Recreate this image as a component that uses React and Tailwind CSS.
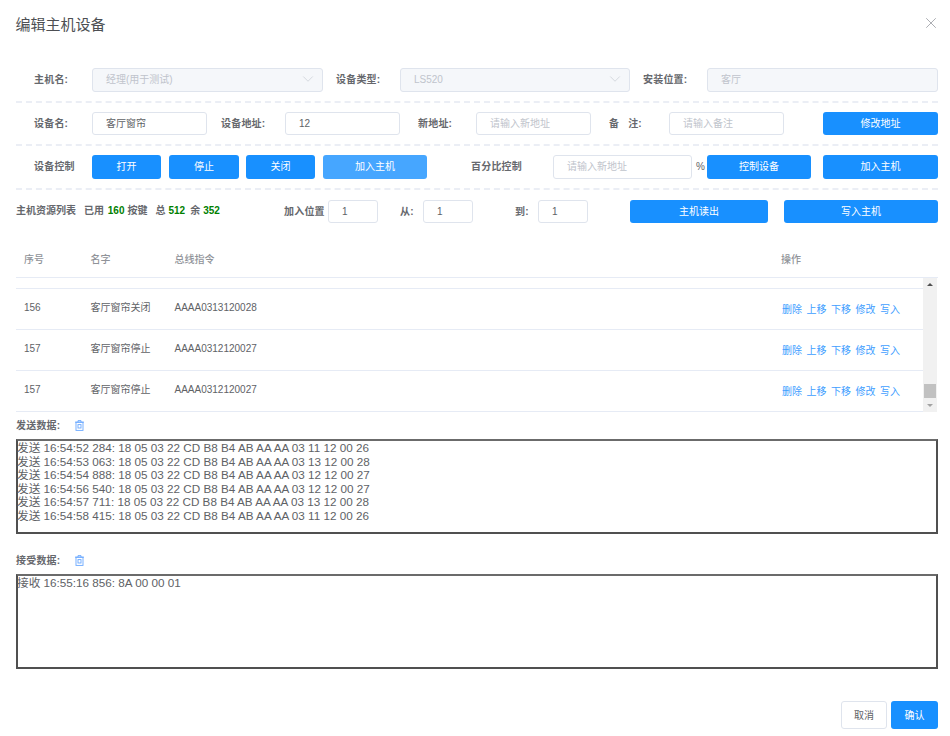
import React from "react";
import { ChevronDown, X } from "lucide-react";

const FONT = "font-['Liberation_Sans','Noto_Sans_CJK_SC',sans-serif]";

const Label = ({ className = "", children }) => (
  <span className={`shrink-0 text-[10px] font-bold text-[#66686d] tracking-[0.2px] ${className}`}>
    {children}
  </span>
);

const Input = ({ className = "", value, placeholder, disabled, chevron }) => (
  <div
    className={`shrink-0 h-[23.5px] flex items-center justify-between pl-[13px] pr-[12px] rounded-[3px] border text-[10px] border-[#dfe4ed] ${
      disabled ? "bg-[#f5f7fa] text-[#c0c4cc]" : "bg-white text-[#606266]"
    } ${className}`}
  >
    {value ? <span>{value}</span> : <span className="text-[#c0c4cc]">{placeholder}</span>}
    {chevron && <ChevronDown size={18} strokeWidth={0.8} className="text-[#c0c4cc] -mt-[2px] -mr-[7px]" />}
  </div>
);

const Btn = ({ className = "", light, children }) => (
  <button
    className={`shrink-0 h-[23.5px] rounded-[3px] text-white text-[10px] ${
      light ? "bg-[#46a6ff]" : "bg-[#1890ff]"
    } ${className}`}
  >
    {children}
  </button>
);

const FormRow = ({ children }) => (
  <div className="h-[43.5px] flex items-center pl-[18px] border-b-2 border-dashed border-[#ebeef5]">
    {children}
  </div>
);

const TrashIcon = () => (
  <svg width="9" height="11" viewBox="0 0 9 11" fill="none" stroke="#6aa8ff" strokeWidth="0.9">
    <path d="M0 2.2h9M3 2.2V.6h3v1.6" />
    <rect x="1" y="2.2" width="7" height="8.2" />
    <rect x="3" y="4.6" width="3" height="3.4" />
  </svg>
);

const rows = [
  { no: "156", name: "客厅窗帘关闭", cmd: "AAAA0313120028" },
  { no: "157", name: "客厅窗帘停止", cmd: "AAAA0312120027" },
  { no: "157", name: "客厅窗帘停止", cmd: "AAAA0312120027" },
];

const sendLines = [
  "发送 16:54:52 284: 18 05 03 22 CD B8 B4 AB AA AA 03 11 12 00 26",
  "发送 16:54:53 063: 18 05 03 22 CD B8 B4 AB AA AA 03 13 12 00 28",
  "发送 16:54:54 888: 18 05 03 22 CD B8 B4 AB AA AA 03 12 12 00 27",
  "发送 16:54:56 540: 18 05 03 22 CD B8 B4 AB AA AA 03 12 12 00 27",
  "发送 16:54:57 711: 18 05 03 22 CD B8 B4 AB AA AA 03 13 12 00 28",
  "发送 16:54:58 415: 18 05 03 22 CD B8 B4 AB AA AA 03 11 12 00 26",
];

const LogBox = ({ lines }) => (
  <div className="h-[94.5px] border-2 border-[#505050] border-t-[#6b6b6b] text-[11.7px] leading-[13.5px] text-[#606266]">
    {lines.map((line, i) => (
      <div key={i} className="whitespace-pre -ml-px">{line}</div>
    ))}
  </div>
);

const LogHeader = ({ title }) => (
  <div className="flex items-center h-[14px]">
    <Label className="w-[59px]">{title}</Label>
    <TrashIcon />
  </div>
);

const App = () => {
  return (
    <div className={`w-[950px] h-[736px] bg-white overflow-hidden pl-4 pr-3 ${FONT}`}>
      {/* Header */}
      <div className="h-[59px] flex items-start justify-between pt-[14px]">
        <h1 className="text-[15px] leading-[22px] text-[#4d4f53] -ml-[0.5px]">编辑主机设备</h1>
        <X size={18} strokeWidth={1} className="text-[#909399] -mt-[0.5px] -mr-[2px]" />
      </div>

      {/* Form */}
      <FormRow>
        <Label className="w-[58px]">主机名:</Label>
        <Input className="w-[231px]" value="经理(用于测试)" disabled chevron />
        <Label className="ml-[13px] w-[64px]">设备类型:</Label>
        <Input className="w-[230px]" value="LS520" disabled chevron />
        <Label className="ml-[13px] w-[64px]">安装位置:</Label>
        <Input className="flex-1" value="客厅" disabled />
      </FormRow>
      <FormRow>
        <Label className="w-[58px]">设备名:</Label>
        <Input className="w-[115px]" value="客厅窗帘" />
        <Label className="ml-[14px] w-[64px]">设备地址:</Label>
        <Input className="w-[115px]" value="12" />
        <Label className="ml-[18px] w-[58px]">新地址:</Label>
        <Input className="w-[115px]" placeholder="请输入新地址" />
        <Label className="ml-[18px] w-[60px] whitespace-pre">备   注:</Label>
        <Input className="w-[115px]" placeholder="请输入备注" />
        <Btn className="ml-[39px] w-[115px]">修改地址</Btn>
      </FormRow>
      <FormRow>
        <Label className="w-[58px]">设备控制</Label>
        <Btn className="w-[69px]">打开</Btn>
        <Btn className="ml-2 w-[70px]">停止</Btn>
        <Btn className="ml-[7px] w-[69px]">关闭</Btn>
        <Btn className="ml-2 w-[104px]" light>加入主机</Btn>
        <Label className="ml-[44px] w-[82px]">百分比控制</Label>
        <Input className="w-[139px]" placeholder="请输入新地址" />
        <span className="w-[15px] pl-[4px] text-[10px] text-[#606266]">%</span>
        <Btn className="w-[104px]">控制设备</Btn>
        <Btn className="ml-3 w-[115px]">加入主机</Btn>
      </FormRow>
      <div className="h-[43.5px] flex items-center">
        <div className="w-[268px] flex text-[10px] font-bold text-[#66686d] whitespace-pre -mt-[2px]">
          <span>主机资源列表</span>
          <span className="ml-2">已用 </span>
          <span className="ml-[1px] text-[#008000]">160</span>
          <span className="ml-[3px]">按键</span>
          <span className="ml-2">总</span>
          <span className="ml-[3px] text-[#008000]">512</span>
          <span className="ml-[5px]">余</span>
          <span className="ml-[3px] text-[#008000]">352</span>
        </div>
        <Label className="w-[44px]">加入位置</Label>
        <Input className="w-[50px]" value="1" />
        <Label className="ml-[22px] w-[23px]">从:</Label>
        <Input className="w-[50px]" value="1" />
        <Label className="ml-[42px] w-[23px]">到:</Label>
        <Input className="w-[50px]" value="1" />
        <Btn className="ml-[42px] w-[138px]">主机读出</Btn>
        <Btn className="ml-4 w-[154px]">写入主机</Btn>
      </div>

      {/* Table */}
      <div className="h-[45px] flex items-center pt-[9px] pl-2 border-b border-[#e6ebf5] text-[10px] font-medium text-[#909399]">
        <span className="w-[66.5px]">序号</span>
        <span className="w-[84px]">名字</span>
        <span className="w-[606.5px]">总线指令</span>
        <span>操作</span>
      </div>
      <div className="flex h-[134px]">
        <div className="flex-1">
          <div className="h-[11px] border-b border-[#e6ebf5]" />
          {rows.map((row, i) => (
            <div key={i} className="h-[41px] flex items-center pl-2 border-b border-[#e6ebf5] text-[10px] text-[#606266]">
              <span className="w-[66.5px] -mt-[3px]">{row.no}</span>
              <span className="w-[84px] -mt-[3px]">{row.name}</span>
              <span className="w-[607.5px] -mt-[3px]">{row.cmd}</span>
              <div className="flex gap-[4.5px] text-[#409eff]">
                <span>删除</span>
                <span>上移</span>
                <span>下移</span>
                <span>修改</span>
                <span>写入</span>
              </div>
            </div>
          ))}
        </div>
        <div className="w-[14px] mr-px bg-[#f1f1f1] relative flex flex-col justify-between items-center py-[5px]">
          <div className="w-0 h-0 border-x-[3px] border-x-transparent border-b-[3px] border-b-[#505050]" />
          <div className="absolute left-[1px] right-[1px] top-[106px] h-[14px] bg-[#c1c1c1]" />
          <div className="w-0 h-0 border-x-[3px] border-x-transparent border-t-[3px] border-t-[#a3a3a3]" />
        </div>
      </div>

      {/* Logs */}
      <div className="mt-[6px] mb-[7px]">
        <LogHeader title="发送数据:" />
      </div>
      <LogBox lines={sendLines} />
      <div className="mt-[19.5px] mb-[7px]">
        <LogHeader title="接受数据:" />
      </div>
      <LogBox lines={["接收 16:55:16 856: 8A 00 00 01"]} />

      {/* Footer */}
      <div className="mt-[32.5px] flex justify-end gap-1">
        <button className="w-[46px] h-[28px] rounded-[3px] border border-[#dfe4ed] text-[10px] text-[#606266]">取消</button>
        <Btn className="w-[47px] !h-[28px]">确认</Btn>
      </div>
    </div>
  );
};

export default App;
